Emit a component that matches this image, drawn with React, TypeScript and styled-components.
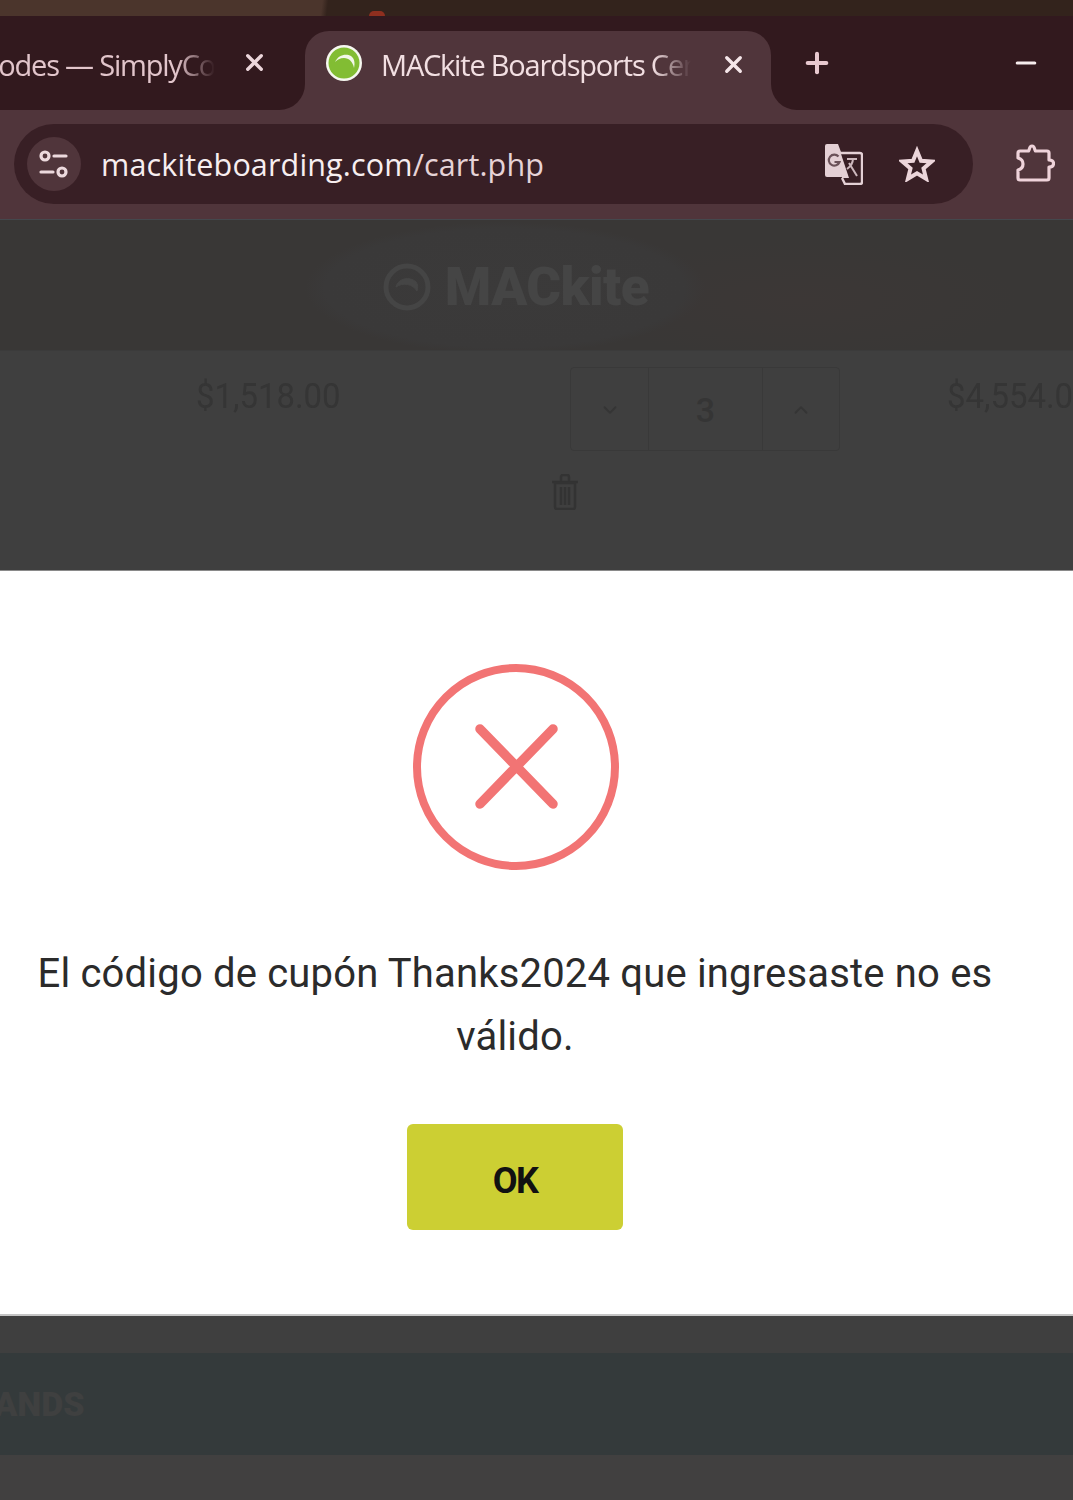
import styled, { createGlobalStyle } from 'styled-components';
import { ChevronDown, ChevronUp, Minus, Plus, X } from 'lucide-react';

const GlobalStyle = createGlobalStyle`
  html, body {
    margin: 0;
    padding: 0;
    background: #3f3f3f;
  }
  * {
    box-sizing: border-box;
  }
`;

const Screen = styled.div`
  width: 1073px;
  height: 1500px;
  overflow: hidden;
  display: flex;
  flex-direction: column;
  background: #3f3f3f;
`;

const Wallpaper = styled.div`
  height: 16px;
  display: flex;
  align-items: flex-end;
  padding-left: 369px;
  background: linear-gradient(97deg, #4b352c 0, #4b352c 320px, #33231c 326px, #33231c 100%);
`;

const RedDot = styled.span`
  width: 16px;
  height: 5px;
  border-radius: 8px 8px 0 0;
  background: #8f2f1f;
`;

const TabStrip = styled.div`
  height: 108px;
  display: grid;
  grid-template-columns: 305px 466px 1fr;
  background: #50353b;
  font-family: "Open Sans", "Noto Sans", sans-serif;
`;

const DarkLeft = styled.div`
  height: 94px;
  display: flex;
  justify-content: flex-end;
  align-items: flex-start;
  padding: 28px 45px 0 0;
  gap: 26px;
  overflow: hidden;
  background: #32191e;
  border-bottom-right-radius: 26px;
`;

const DarkRight = styled(DarkLeft)`
  justify-content: space-between;
  padding: 26px 32px 0 30px;
  border-bottom-right-radius: 0;
  border-bottom-left-radius: 26px;
  color: #e8c8cf;
`;

const TabSlot = styled.div`
  background: #32191e;
  padding-top: 15px;
`;

const ActiveTab = styled.div`
  height: 93px;
  display: flex;
  align-items: flex-start;
  padding: 13px 24px 0 20px;
  background: #50353b;
  border-radius: 24px 24px 0 0;
`;

const TabTitle = styled.span<{ $width: number; $muted?: boolean }>`
  flex: 0 0 ${(p) => p.$width}px;
  width: ${(p) => p.$width}px;
  margin-top: 2px;
  overflow: hidden;
  white-space: nowrap;
  font-size: 29px;
  line-height: 38px;
  letter-spacing: -1.2px;
  color: ${(p) => (p.$muted ? '#e2c5cb' : '#f2dfe2')};
  -webkit-mask-image: linear-gradient(to right, #000 calc(100% - 38px), transparent 100%);
  mask-image: linear-gradient(to right, #000 calc(100% - 38px), transparent 100%);
`;

const LeftTitle = styled(TabTitle)`
  direction: rtl;
  text-align: left;
`;

const Favicon = styled.svg`
  flex: 0 0 38px;
  width: 38px;
  height: 38px;
  margin-right: 18px;
`;

const CloseButton = styled.span<{ $bright?: boolean }>`
  flex: 0 0 26px;
  height: 38px;
  margin-top: 1px;
  margin-left: 29px;
  display: flex;
  align-items: center;
  justify-content: center;
  color: ${(p) => (p.$bright ? '#f5e6e9' : '#ecd6db')};
`;

const LeftClose = styled(CloseButton)`
  margin: -1px -8px 0 0;
`;

const WindowIcon = styled.span`
  display: flex;
  height: 42px;
  align-items: center;
`;

const Toolbar = styled.div`
  height: 95px;
  display: flex;
  align-items: flex-start;
  justify-content: space-between;
  padding: 0 18px 0 14px;
  background: #50353b;
`;

const Omnibox = styled.div`
  width: 959px;
  height: 80px;
  display: flex;
  align-items: center;
  padding: 0 38px 0 13px;
  border-radius: 40px;
  background: #381f25;
  font-family: "Open Sans", "Noto Sans", sans-serif;
`;

const SiteInfo = styled.div`
  width: 54px;
  height: 54px;
  display: flex;
  align-items: center;
  justify-content: center;
  border-radius: 50%;
  background: #50353b;
`;

const Url = styled.div`
  flex: 1;
  margin-left: 20px;
  font-size: 30.5px;
  letter-spacing: 0.15px;
  color: #f7eef0;
`;

const Muted = styled.span`
  color: #e6d3d7;
`;

const OmniIcons = styled.div`
  display: flex;
  align-items: center;
  gap: 36px;
`;

const ExtensionSlot = styled.div`
  height: 80px;
  display: flex;
  align-items: center;
`;

const SiteHeader = styled.div`
  height: 131px;
  display: flex;
  align-items: center;
  justify-content: center;
  gap: 14px;
  padding: 4px 41px 0 0;
  border-top: 1px solid #44484d;
  background:
    radial-gradient(ellipse 200px 66px at 505px 68px, #3b3a3a 0, #3a3939 90%, transparent 100%),
    radial-gradient(ellipse 220px 60px at 800px 80px, #3c3736 0, transparent 100%),
    #393736;
`;

const Logo = styled.span`
  font-family: "Roboto", "Liberation Sans", sans-serif;
  font-weight: 900;
  font-size: 53px;
  letter-spacing: -0.5px;
  color: #454545;
`;

const CartRow = styled.div`
  height: 220px;
  display: grid;
  grid-template-columns: 196px 374px 270px 107px 1fr;
  align-content: start;
  padding-top: 16px;
  border-top: 1px solid #3b3b3b;
  font-family: "Roboto", "Liberation Sans", sans-serif;
  color: #353535;
`;

const Price = styled.div<{ $col: number }>`
  grid-column: ${(p) => p.$col};
  margin-top: 10px;
  font-size: 35px;
  line-height: 40px;
  white-space: nowrap;
  transform: scaleX(0.94);
  transform-origin: left;
`;

const Stepper = styled.div`
  grid-column: 3;
  height: 84px;
  display: grid;
  grid-template-columns: 77px 114px 1fr;
  border: 1px solid #393939;
  border-radius: 4px;
`;

const StepCell = styled.div`
  display: flex;
  align-items: center;
  justify-content: center;
  padding-top: 2px;
  font-size: 34px;
  font-weight: 500;
  border-left: 1px solid #393939;

  &:first-child {
    border-left: 0;
  }
`;

const TrashRow = styled.div`
  grid-column: 3;
  grid-row: 2;
  margin-top: 23px;
  margin-left: -19px;
`;

const Dialog = styled.div`
  height: 746px;
  display: flex;
  flex-direction: column;
  align-items: center;
  padding: 93px 43px 0 0;
  background: #fff;
  border-top: 1px solid #8a8a8a;
  border-bottom: 2px solid #c4c4c4;
`;

const ErrorIcon = styled.svg`
  width: 206px;
  height: 206px;
  margin-left: 2px;
`;

const Message = styled.p`
  width: 1000px;
  margin: 72px 0 0;
  text-align: center;
  font-family: "Roboto", "Liberation Sans", sans-serif;
  font-size: 40px;
  line-height: 63px;
  letter-spacing: 0.18px;
  color: #2b2b2b;
`;

const OkButton = styled.button`
  width: 216px;
  height: 106px;
  margin-top: 56px;
  border: 0;
  border-radius: 6px;
  background: #cccf33;
  font-family: "Roboto", "Liberation Sans", sans-serif;
  font-weight: 700;
  font-size: 36px;
  letter-spacing: -1.5px;
  padding-top: 8px;
  color: #111;
`;

const FooterGap = styled.div`
  height: 37px;
  background: #3f3f3f;
`;

const BrandBand = styled.div`
  height: 102px;
  display: flex;
  align-items: center;
  overflow: hidden;
  background: #343a3b;
`;

const BrandTitle = styled.span`
  margin-left: -50px;
  font-family: "Roboto", "Liberation Sans", sans-serif;
  font-weight: 900;
  font-size: 34px;
  color: #3f4040;
`;

const FooterEnd = styled.div`
  flex: 1;
  background: #414040;
`;

function TuneIcon() {
  return (
    <svg width="32" height="30" viewBox="0 0 32 30" fill="none" stroke="#ecd9dd" strokeWidth="3.2">
      <circle cx="7" cy="7" r="4" />
      <path d="M16 7h12M3 23h12" strokeLinecap="round" />
      <circle cx="24" cy="23" r="4" />
    </svg>
  );
}

function TranslateIcon() {
  return (
    <svg width="40" height="42" viewBox="0 0 40 42">
      <path d="M2 3a2 2 0 0 1 2-2h11l3 8 8 25H4a2 2 0 0 1-2-2z" fill="#e4d0d5" />
      <path d="M18 10h19a2 2 0 0 1 2 2v27a2 2 0 0 1-2 2H22l-3-6" fill="#381f25" stroke="#e4d0d5" strokeWidth="2.400" />
      <path d="M17 8l9 27-7 0-7-27z" fill="#e4d0d5" />
      <path d="M15.500 13.500a5.500 5.500 0 1 0 1 5.500h-5" fill="none" stroke="#6b5259" strokeWidth="2.200" />
      <path d="M24 16h10M30 15c0 6-3 9-6 11M26 20l8 13" fill="none" stroke="#cdb8bd" strokeWidth="2" />
    </svg>
  );
}

function StarIcon() {
  return (
    <svg width="36" height="36" viewBox="0 0 36 36" fill="none" stroke="#ecd5da" strokeWidth="4" strokeLinejoin="miter">
      <path d="M18 5l4 9.800 10.500.8-8 6.900 2.600 10.300-9.100-5.500-9.100 5.500 2.600-10.300-8-6.900 10.500-.8z" />
    </svg>
  );
}

function ExtensionIcon() {
  return (
    <svg width="40" height="40" viewBox="0 0 40 40" fill="none" stroke="#efd3da" strokeWidth="3.200" strokeLinejoin="round">
      <path d="M3 9a2 2 0 0 1 2-2h8.500c1.500-2 .5-5 3.500-5s2 3 3.500 5H32a2 2 0 0 1 2 2v7c3.500 0 4.500 2 4.500 3.500S37.500 23 34 23v11a2 2 0 0 1-2 2H5a2 2 0 0 1-2-2v-8c4-1 5-3 5-6s-1-5-5-6z" />
    </svg>
  );
}

function TrashIcon() {
  return (
    <svg width="28" height="36" viewBox="0 0 28 36" fill="none" stroke="#333" strokeWidth="2.500">
      <path d="M1 8h26M10 7V3a2 2 0 0 1 2-2h4a2 2 0 0 1 2 2v4" />
      <path d="M4 9v24a2 2 0 0 0 2 2h16a2 2 0 0 0 2-2V9zM10 13v18M14 13v18M18 13v18" />
    </svg>
  );
}

function App() {
  return (
    <Screen>
      <GlobalStyle />
      <Wallpaper>
        <RedDot />
      </Wallpaper>
      <TabStrip>
        <DarkLeft>
          <LeftTitle $width={250} $muted>
            <bdi>Promo Codes — SimplyCo</bdi>
          </LeftTitle>
          <LeftClose>
            <X size={27} strokeWidth={3} />
          </LeftClose>
        </DarkLeft>
        <TabSlot>
          <ActiveTab>
            <Favicon viewBox="0 0 38 38">
              <circle cx="19" cy="19" r="18" fill="#f6f8f0" />
              <circle cx="19" cy="19" r="15.500" fill="#82bd33" />
              <path d="M10 18c3-7 11-9 16-6 4 3 4 8 3 12-1-6-5-10-10-10-4 0-7 2-9 4z" fill="#f2f7e8" />
            </Favicon>
            <TabTitle $width={310}>MACkite Boardsports Center</TabTitle>
            <CloseButton $bright>
              <X size={27} strokeWidth={3} />
            </CloseButton>
          </ActiveTab>
        </TabSlot>
        <DarkRight>
          <WindowIcon>
            <Plus size={32} strokeWidth={3} />
          </WindowIcon>
          <WindowIcon>
            <Minus size={30} strokeWidth={2.500} color="#f6eced" />
          </WindowIcon>
        </DarkRight>
      </TabStrip>
      <Toolbar>
        <Omnibox>
          <SiteInfo>
            <TuneIcon />
          </SiteInfo>
          <Url>
            mackiteboarding.com<Muted>/cart.php</Muted>
          </Url>
          <OmniIcons>
            <TranslateIcon />
            <StarIcon />
          </OmniIcons>
        </Omnibox>
        <ExtensionSlot>
          <ExtensionIcon />
        </ExtensionSlot>
      </Toolbar>
      <SiteHeader>
        <svg width="48" height="48" viewBox="0 0 48 48" fill="none" stroke="#454545">
          <circle cx="24" cy="24" r="21" strokeWidth="5" />
          <path d="M13 24c2-9 14-11 20-5 2 2 2 6 1 9-4-7-14-9-21-4z" fill="#454545" strokeWidth="1" />
        </svg>
        <Logo>MACkite</Logo>
      </SiteHeader>
      <CartRow>
        <Price $col={2}>$1,518.00</Price>
        <Stepper>
          <StepCell>
            <ChevronDown size={22} />
          </StepCell>
          <StepCell>3</StepCell>
          <StepCell>
            <ChevronUp size={22} />
          </StepCell>
        </Stepper>
        <Price $col={5}>$4,554.00</Price>
        <TrashRow>
          <TrashIcon />
        </TrashRow>
      </CartRow>
      <Dialog>
        <ErrorIcon viewBox="0 0 206 206" fill="none" stroke="#f27474">
          <circle cx="103" cy="103" r="99" strokeWidth="8" />
          <path d="M67 65l73 75M140 65l-73 75" strokeWidth="9.500" strokeLinecap="round" />
        </ErrorIcon>
        <Message>El código de cupón Thanks2024 que ingresaste no es válido.</Message>
        <OkButton>OK</OkButton>
      </Dialog>
      <FooterGap />
      <BrandBand>
        <BrandTitle>BRANDS</BrandTitle>
      </BrandBand>
      <FooterEnd />
    </Screen>
  );
}

export default App;
